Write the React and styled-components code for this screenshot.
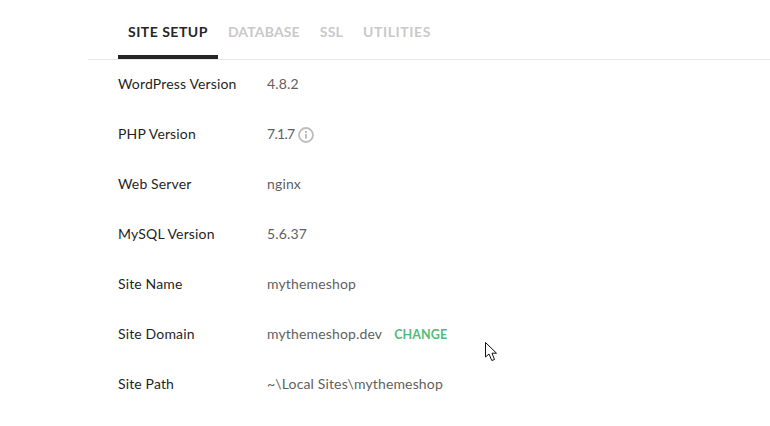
import React from "react";
import styled, { createGlobalStyle } from "styled-components";

const Global = createGlobalStyle`
  html, body { margin: 0; padding: 0; background: #fff; }
  body { width: 770px; height: 426px; overflow: hidden; font-family: Lato, "Liberation Sans", sans-serif; }
`;
const Page = styled.div`
  width: 770px; height: 426px; padding-left: 88px; box-sizing: border-box; position: relative;
`;
const Tabs = styled.nav`
  display: flex; height: 60px; padding-left: 30px; border-bottom: 1px solid #e7e7e7; box-sizing: border-box;
`;
const Tab = styled.div`
  height: 59px; box-sizing: border-box; display: flex; align-items: center;
  padding: 7px 10px 4px;
  font-size: 14px; font-weight: 700;
  letter-spacing: ${p => p.$spacing};
  color: ${p => (p.$active ? "#262626" : "#c9c9c9")};
  ${p => p.$active && "border-bottom: 4px solid #262626; padding-bottom: 0;"}
`;
const List = styled.div`
  padding-left: 30px; display: flex; flex-direction: column;
`;
const Row = styled.div`
  display: grid; grid-template-columns: 149px 1fr; align-items: start; height: 50px; box-sizing: border-box;
  padding-top: 15px; font-size: 14px; line-height: 18px;
`;
const Label = styled.div` color: #1f1f1f; font-weight: 400; letter-spacing: 0.15px; `;
const Value = styled.div`
  color: #5f5f5f; display: flex; align-items: center; height: 18px;
  letter-spacing: ${p => (p.$tight ? "-0.7px" : "0.15px")};
`;
const Change = styled.span`
  color: #51bb7b; font-weight: 700; font-size: 12.5px; letter-spacing: 0.1px; margin: 1px 0 0 12px;
`;
const Info = styled.svg` margin-left: 4px; margin-top: 2px; `;
const Cursor = styled.svg` position: absolute; left: 485px; top: 342px; `;

const tabs = [
  ["SITE SETUP", "0.5px", true],
  ["DATABASE", "0.15px", false],
  ["SSL", "0.15px", false],
  ["UTILITIES", "0.6px", false],
];

const rows = [
  ["WordPress Version", "4.8.2"],
  ["PHP Version", "7.1.7", "info"],
  ["Web Server", "nginx"],
  ["MySQL Version", "5.6.37"],
  ["Site Name", "mythemeshop"],
  ["Site Domain", "mythemeshop.dev", "change"],
  ["Site Path", "~\\Local Sites\\mythemeshop"],
];

export default function App() {
  return (
    <Page>
      <Global />
      <Tabs>
        {tabs.map(([t, s, a]) => (
          <Tab key={t} $active={a} $spacing={s}>{t}</Tab>
        ))}
      </Tabs>
      <List>
        {rows.map(([l, v, x]) => (
          <Row key={l}>
            <Label>{l}</Label>
            <Value $tight={x === "info"}>
              {v}
              {x === "change" && <Change>CHANGE</Change>}
              {x === "info" && (
                <Info width="16" height="16" viewBox="0 0 16 16">
                  <circle cx="8" cy="8" r="7" fill="none" stroke="#bdbdbd" strokeWidth="1.8" />
                  <rect x="7" y="7" width="2" height="4.6" fill="#bdbdbd" />
                  <rect x="7" y="4" width="2" height="2" fill="#bdbdbd" />
                </Info>
              )}
            </Value>
          </Row>
        ))}
      </List>
      <Cursor width="14" height="20" viewBox="0 0 14 20">
        <path d="M0.5 0.5 L0.5 15 L4 12 L6.8 18.5 L9.5 17.5 L7 11.2 L11.5 11.2 Z" fill="#fff" stroke="#111" strokeWidth="1" />
      </Cursor>
    </Page>
  );
}
